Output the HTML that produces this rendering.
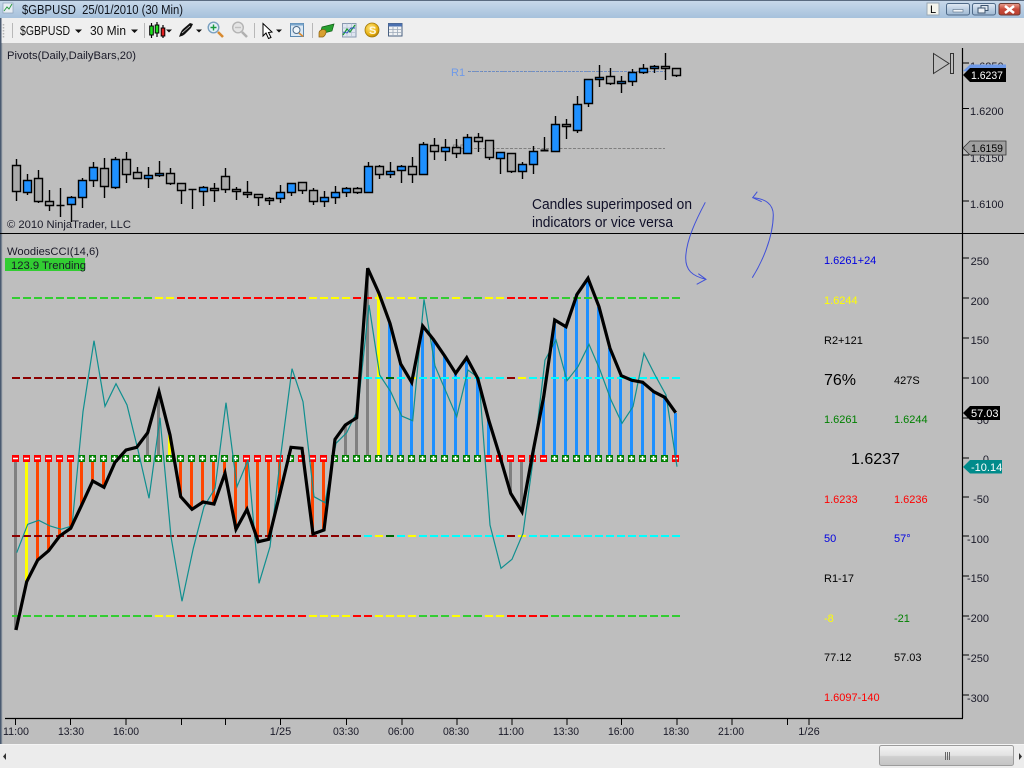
<!DOCTYPE html>
<html><head><meta charset="utf-8"><title>$GBPUSD</title>
<style>
html,body{margin:0;padding:0;background:#bebebe;width:1024px;height:768px;overflow:hidden}
svg{display:block;position:absolute;left:0;top:0}
text{font-family:"Liberation Sans",Arial,sans-serif;font-size:11px;fill:#1a1a28;white-space:pre}
</style></head><body>
<svg width="1024" height="768" viewBox="0 0 1024 768" xmlns="http://www.w3.org/2000/svg">
<defs>
<linearGradient id="tb" x1="0" y1="0" x2="0" y2="1"><stop offset="0" stop-color="#c9d9ea"/><stop offset="1" stop-color="#a6c1dc"/></linearGradient>
<linearGradient id="btn" x1="0" y1="0" x2="0" y2="1"><stop offset="0" stop-color="#e2ebf4"/><stop offset=".5" stop-color="#bccfe2"/><stop offset="1" stop-color="#9fb8d2"/></linearGradient>
<linearGradient id="cls" x1="0" y1="0" x2="0" y2="1"><stop offset="0" stop-color="#e8a090"/><stop offset=".5" stop-color="#c8493a"/><stop offset="1" stop-color="#b84030"/></linearGradient>
<linearGradient id="th" x1="0" y1="0" x2="0" y2="1"><stop offset="0" stop-color="#f4f4f4"/><stop offset=".5" stop-color="#e2e2e2"/><stop offset=".55" stop-color="#cfcfcf"/><stop offset="1" stop-color="#c4c4c4"/></linearGradient>
<radialGradient id="coin" cx=".4" cy=".35" r=".7"><stop offset="0" stop-color="#ffe680"/><stop offset=".7" stop-color="#e8b010"/><stop offset="1" stop-color="#a87808"/></radialGradient>
</defs>

<!-- background -->
<rect width="1024" height="768" fill="#bebebe"/>
<!-- title bar -->
<rect width="1024" height="18" fill="url(#tb)"/>
<rect width="1024" height="1" fill="#5a6b80"/>
<!-- window icon -->
<rect x="3" y="3" width="10" height="10" fill="#e8eef4" stroke="#8aa0b8" stroke-width=".7"/>
<path d="M4 11L7 7L9 9L12 4" fill="none" stroke="#2a9a40"/>
<text x="22" y="14" textLength="161" lengthAdjust="spacingAndGlyphs" style="font-size:13px;fill:#10141c">$GBPUSD  25/01/2010 (30 Min)</text>
<!-- window buttons -->
<rect x="927" y="3" width="12" height="12" fill="#f4f4ec" stroke="#9aa8b4"/>
<text x="930" y="13" style="font-size:11px;fill:#000">L</text>
<rect x="946.5" y="3.5" width="23" height="11.5" rx="2" fill="url(#btn)" stroke="#4f6a88"/>
<rect x="953" y="9.5" width="10" height="2.5" fill="#f0f4f8" stroke="#5a7088" stroke-width=".6"/>
<rect x="972.5" y="3.5" width="23" height="11.5" rx="2" fill="url(#btn)" stroke="#4f6a88"/>
<rect x="981" y="5.5" width="7" height="5" fill="#dfe8f0" stroke="#3e5570"/>
<rect x="978" y="8" width="7" height="5" fill="#eef2f6" stroke="#3e5570"/>
<rect x="999" y="3.5" width="21" height="11.5" rx="2" fill="url(#cls)" stroke="#6a3a34"/>
<path d="M1005 6L1014 13M1014 6L1005 13" stroke="#fff" stroke-width="2.6"/>

<!-- toolbar -->
<rect y="18" width="1024" height="25" fill="#efefef"/>
<path d="M3.5 24V38" stroke="#b4b4b4" stroke-width="1.5" stroke-dasharray="1.5 1.5"/>
<path d="M12.5 23V38M144.5 23V38M254.5 23V38M312.5 23V38" stroke="#b8b8b8"/>
<text x="20" y="35" textLength="50" lengthAdjust="spacingAndGlyphs" style="font-size:13px;fill:#111">$GBPUSD</text>
<text x="90" y="35" textLength="36" lengthAdjust="spacingAndGlyphs" style="font-size:13px;fill:#111">30 Min</text>
<path d="M75 29.5h7l-3.5 3.5zM131 29.5h7l-3.5 3.5zM166 29.5h6l-3 3zM196 29.5h6l-3 3zM276 29.5h6l-3 3z" fill="#111"/>
<!-- candle icon -->
<path d="M151.5 23V38M157 22V37M163 25V38" stroke="#000" stroke-width="1.2"/>
<rect x="149.7" y="26" width="3.6" height="9" fill="#1fe01f" stroke="#000"/>
<rect x="155.2" y="25" width="3.6" height="8" fill="#1fe01f" stroke="#000"/>
<rect x="161.2" y="28" width="3.6" height="8" fill="#e01f1f" stroke="#000"/>
<!-- pen -->
<path d="M179 37C180 34 181 31 183 29L190 23L193 24L191 28L185 34C183 36 181 36 179 37Z" fill="#111"/>
<path d="M182 33L190 26" stroke="#ddd" stroke-width=".7"/>
<!-- zoom in -->
<path d="M218 32L223 37" stroke="#d88a30" stroke-width="2.6"/>
<circle cx="213.5" cy="27.5" r="5.3" fill="#e4f0f8" stroke="#7aa0c0" stroke-width="1.4"/>
<path d="M210.5 27.5h6M213.5 24.5v6" stroke="#1a9a40" stroke-width="1.4"/>
<!-- zoom out -->
<path d="M242 32L247 37" stroke="#b0b0b0" stroke-width="2.6"/>
<circle cx="238" cy="27.5" r="5.3" fill="#e4e4e4" stroke="#b4b4b4" stroke-width="1.4"/>
<path d="M235 27.5h6" stroke="#c0c0c0" stroke-width="1.4"/>
<!-- arrow -->
<path d="M263 23.5V36L266 33L268.5 38.5L271 37.5L268.5 32.5L272 32Z" fill="#fff" stroke="#000"/>
<!-- zoom box -->
<rect x="290.5" y="23.5" width="13" height="13" fill="#dbe8f4" stroke="#5a88b0"/>
<rect x="290.5" y="23.5" width="13" height="2" fill="#7aa6cc"/>
<circle cx="296.5" cy="30" r="3.5" fill="#f0f6fa" stroke="#4a6a8a"/>
<path d="M299 33L303 36.5" stroke="#d88a30" stroke-width="1.6"/>
<!-- green/gold -->
<path d="M322 27L334 24L332 31L320 34Z" fill="#28a030" stroke="#106018" stroke-width=".7"/>
<path d="M319 33C319 30 323 29 325 30C327 31 326 35 323 37L319 37Z" fill="#d8a030" stroke="#8a6010" stroke-width=".7"/>
<!-- chart -->
<rect x="342.5" y="23.5" width="13.5" height="13.5" fill="#dfe6f0" stroke="#8a9ab0"/>
<path d="M342.5 28h13.5M342.5 32.5h13.5M347 23.5v13.5M351.5 23.5v13.5" stroke="#b4c0d0" stroke-width=".7"/>
<path d="M343 35L347 29L350 32L355 25" fill="none" stroke="#1a9a30" stroke-width="1.2"/>
<path d="M343 32L347 33L351 28L355 28" fill="none" stroke="#2a50c0" stroke-width=".9"/>
<!-- coin -->
<circle cx="372" cy="30" r="7" fill="url(#coin)" stroke="#a07808" stroke-width=".8"/>
<text x="369" y="34" style="font-size:11px;font-weight:bold;fill:#fff8e0">S</text>
<!-- table -->
<rect x="388.5" y="23.5" width="13.5" height="12.5" fill="#f0f2f4" stroke="#4a6080"/>
<rect x="388.5" y="23.5" width="13.5" height="3" fill="#4a70b0"/>
<path d="M389 29.5h13M389 32.5h13M393 27v9M397.5 27v9" stroke="#9aa8b8" stroke-width=".8"/>

<!-- left window border -->
<rect x="0" y="18" width="1.5" height="727" fill="#4a5a70"/>
<rect x="1.5" y="43" width="1" height="702" fill="#8a94a2" opacity=".5"/>

<!-- pivots -->
<text x="7" y="59" textLength="129" lengthAdjust="spacingAndGlyphs">Pivots(Daily,DailyBars,20)</text>
<text x="451" y="76" style="font-size:11px;fill:#6f9ae8">R1</text>
<text x="452" y="152" style="font-size:11px;fill:#808080">PP</text>
<path d="M468 71.5H665" stroke="#6f8fc8" stroke-dasharray="3 1"/>
<path d="M468 71.5H665" stroke="#808080" stroke-dasharray="1 6" opacity=".7"/>
<path d="M465 148.5H665" stroke="#808080" stroke-dasharray="3 1.5"/>

<!-- wicks -->
<path fill="none" stroke="#000" stroke-width="1.4" d="M16.5 159V201M27.5 174V195M38.5 170V203M49.5 190V211M60.5 188V217M71.5 196V222M82.5 178V208M93.5 162V187M104.5 158V198M115.5 157V189M126.5 152V183M137.5 167V179M148.5 167V188M159.5 161V177M170.5 168V185M181.5 183V204M192.5 189V209M203.5 186V206M214.5 183V202M225.5 168V193M236.5 187V200M247.5 181V198M258.5 194V206M269.5 197V205M280.5 185V203M291.5 183V196M302.5 182V194M313.5 188V205M324.5 191V207M335.5 186V204M346.5 187V197M357.5 187V194M368.5 162V192M379.5 165V179M390.5 162V178M401.5 165V183M412.5 157V183M423.5 142V174M434.5 138V160M445.5 139V161M456.5 139V158M467.5 134V153M478.5 133V152M489.5 140V160M500.5 152V174M511.5 153V173M522.5 162V179M533.5 146V174M544.5 137V151M555.5 116V151M566.5 119V139M577.5 96V133M588.5 79V107M599.5 65V87M610.5 68V85M621.5 76V93M632.5 69V86M643.5 64V74M654.5 65V73M665.5 53V80M676.5 68V77"/>
<!-- gray bodies -->
<path fill="#a9a9a9" stroke="#000" stroke-width="1.4" d="M12.5 165.5h8v26h-8zM34.5 178.5h8v23h-8zM45.5 201.5h8v4h-8zM100.5 168.5h8v18h-8zM122.5 159.5h8v15h-8zM133.5 172.5h8v6h-8zM166.5 173.5h8v10h-8zM177.5 183.5h8v7h-8zM210.5 188.5h8v2h-8zM221.5 176.5h8v13h-8zM232.5 189.5h8v2h-8zM243.5 192.5h8v2h-8zM254.5 194.5h8v3h-8zM265.5 198.5h8v2h-8zM298.5 182.5h8v8h-8zM309.5 190.5h8v11h-8zM353.5 188.5h8v4h-8zM375.5 166.5h8v8h-8zM408.5 166.5h8v8h-8zM430.5 145.5h8v6h-8zM452.5 147.5h8v6h-8zM474.5 137.5h8v4h-8zM485.5 140.5h8v17h-8zM507.5 153.5h8v18h-8zM562.5 124.5h8v2h-8zM606.5 76.5h8v7h-8zM661.5 66.5h8v2h-8zM672.5 68.5h8v7h-8z"/>
<!-- blue bodies -->
<path fill="#1e90ff" stroke="#000" stroke-width="1.4" d="M23.5 180.5h8v12h-8zM67.5 197.5h8v7h-8zM78.5 180.5h8v17h-8zM89.5 167.5h8v13h-8zM111.5 159.5h8v28h-8zM144.5 175.5h8v3h-8zM155.5 173.5h8v2h-8zM199.5 187.5h8v4h-8zM276.5 192.5h8v6h-8zM287.5 183.5h8v9h-8zM320.5 197.5h8v4h-8zM331.5 192.5h8v5h-8zM342.5 188.5h8v4h-8zM364.5 166.5h8v26h-8zM386.5 171.5h8v3h-8zM397.5 166.5h8v4h-8zM419.5 144.5h8v30h-8zM441.5 147.5h8v4h-8zM463.5 137.5h8v16h-8zM496.5 152.5h8v6h-8zM518.5 164.5h8v7h-8zM529.5 151.5h8v13h-8zM551.5 124.5h8v27h-8zM573.5 104.5h8v26h-8zM584.5 79.5h8v24h-8zM595.5 77.5h8v2h-8zM617.5 81.5h8v2h-8zM628.5 72.5h8v9h-8zM639.5 68.5h8v4h-8zM650.5 66.5h8v2h-8z"/>
<!-- dojis -->
<path d="M56.5 205.5h8M188.5 189.5h8" stroke="#000" stroke-width="1.4"/>
<path d="M540.5 150.5h8" stroke="#000" stroke-width="2"/>

<text x="7" y="228" textLength="124" lengthAdjust="spacingAndGlyphs">© 2010 NinjaTrader, LLC</text>

<!-- annotation -->
<text x="532" y="209" textLength="160" lengthAdjust="spacingAndGlyphs" style="font-size:14.5px;fill:#101028">Candles superimposed on</text>
<text x="532" y="227" textLength="141" lengthAdjust="spacingAndGlyphs" style="font-size:14.5px;fill:#101028">indicators or vice versa</text>

<!-- pane separator -->
<rect x="0" y="233" width="1024" height="1" fill="#000"/>

<!-- hand drawn arrows -->
<path fill="none" stroke="#4050d8" stroke-width="1" d="M705.3 202.3C697 218 686 240 685.7 258C685.7 270 692 276 706 279.3M698.3 273.7L706 279.3L696.7 284.3"/>
<path fill="none" stroke="#4050d8" stroke-width="1" d="M752.3 277.7C762 262 773 238 773.3 215C773.3 204 765 198.5 752.7 197.7M757.3 191.7L752.7 197.7L761.7 201.7"/>

<!-- top right play icon -->
<path d="M933.5 53.5V73.5L949 63.5Z" fill="none" stroke="#333"/>
<rect x="950.5" y="53.5" width="3" height="20" fill="none" stroke="#333"/>

<!-- CCI legend -->
<text x="7" y="255" textLength="92" lengthAdjust="spacingAndGlyphs">WoodiesCCI(14,6)</text>
<rect x="5" y="258" width="80" height="13" fill="#32cd32"/>
<text x="11" y="269" textLength="75" lengthAdjust="spacingAndGlyphs">123.9 Trending</text>

<!-- histogram bars -->
<g fill="none" stroke-width="3">
<path stroke="#ff4500" d="M37.5 458V560M48.5 458V551M59.5 458V536M70.5 458V528M81.5 458V505M92.5 458V481M103.5 458V487M180.5 458V497M191.5 458V509M202.5 458V502M213.5 458V504M224.5 458V473M235.5 458V529M246.5 458V509M257.5 458V541M268.5 458V539M279.5 458V493M312.5 458V534M323.5 458V530"/>
<path stroke="#808080" d="M15.5 458V630M147.5 458V433M158.5 458V392M345.5 458V425M356.5 458V418M367.5 458V268M510.5 458V493M521.5 458V512"/>
<path stroke="#ffff00" d="M26.5 458V581M169.5 458V435M378.5 458V293"/>
<path stroke="#1e90ff" d="M389.5 458V323M400.5 458V364M411.5 458V382M422.5 458V326M433.5 458V339M444.5 458V356M455.5 458V373M466.5 458V358M477.5 458V378M488.5 458V420M499.5 458V456M532.5 458V453M543.5 458V397M554.5 458V320M565.5 458V327M576.5 458V294M587.5 458V278M598.5 458V307M609.5 458V348M620.5 458V376M631.5 458V380M642.5 458V382M653.5 458V392M664.5 458V397M675.5 458V413"/>
</g>

<!-- dashed level lines -->
<g fill="none" stroke-width="2" stroke-dasharray="8 3">
<path stroke="#32cd32" d="M12 298H152M419 298H449M463 298H482M551 298H680M12 616H152M419 616H449M463 616H482M551 616H680"/>
<path stroke="#ffff00" d="M155 298H174M309 298H350M375 298H416M452 298H460M485 298H504M155 616H174M309 616H350M375 616H416M452 616H460M485 616H504"/>
<path stroke="#ff0000" d="M177 298H306M353 298H372M507 298H548M177 616H306M353 616H372M507 616H548"/>
<path stroke="#8b0000" d="M12 378H361M507 378H515M12 536H361M507 536H515"/>
<path stroke="#00ffff" d="M364 378H383M397 378H405M419 378H504M529 378H680M364 536H372M397 536H405M419 536H504M529 536H680"/>
<path stroke="#ffff00" d="M408 378H416M518 378H526M375 536H383M408 536H416M518 536H526"/>
<path stroke="#006400" d="M386 378H394M386 536H394"/>
</g>

<!-- zero line squares -->
<g fill="none">
<path stroke="#ff0000" stroke-width="7" stroke-dasharray="7 4" d="M12 458.5H74M243 458.5H283M298 458.5H327M485 458.5H547M672 458.5H679"/>
<path stroke="#008000" stroke-width="7" stroke-dasharray="7 4" d="M78 458.5H239M287 458.5H294M331 458.5H481M551 458.5H668"/>
<path stroke="#fff" stroke-width="1.5" stroke-dasharray="5 6" d="M13 458.5H678"/>
<path stroke="#fff" stroke-width="5" stroke-dasharray="1.5 9.5" d="M80.75 458.5H237M289.75 458.5H291.5M333.75 458.5H479M553.75 458.5H666"/>
</g>

<!-- teal line -->
<path fill="none" stroke="#0f8f8f" stroke-width="1.2" d="M16.7 552.7L27.7 524.3L38.7 520.3L50 526L61 529.3L72 526L83 411.7L94 340.7L105 406.3L116 383.7L127 405L138 450L149 498.3L160 417.7L171 536.7L182 601.3L193.3 548.3L204 506.7L215 488.3L226 402.7L237 486.7L248 460L259 583.3L270 546.7L281 453.3L292 368.7L303 401.7L314 496.7L325 502.7L336 443.3L346.7 432.7L357.7 410L369 305L379.7 375L390.7 391.7L401.7 416L412.7 420.7L424 299.3L435 366L446 391.7L456.7 416.7L468 370L479 378.3L490 525L501 568.3L512 559.3L523 533.3L534 453.3L545 360L556 340L567 380.7L578 366.7L589 344.3L600 370L611 400L622 423.3L633 406.7L644 353.3L655 375L666 395L677 466.7"/>
<!-- black CCI line -->
<path fill="none" stroke="#000" stroke-width="3.2" stroke-linejoin="miter" d="M16 630L26.7 581.7L37.7 560L48.7 550.7L59.7 536L70.7 528.3L81.7 505L92.7 481L104 487.3L115 462.3L126 450L136.7 447.3L147.7 432.7L159 391.7L170 435L180.7 496.7L192 509.3L203 502L214 504L225 473.3L236 529.3L247 509.3L258.3 541.7L268.7 539.3L280 493.3L291 447.3L302 448.3L313 534L324 530L335 439.3L345.3 425L356.7 417.7L367.7 268.3L379 293.3L390 323.3L400.7 364L411.7 382.3L422.7 326L433.3 339.3L444.7 356L455.7 373.3L466.7 357.7L477.7 378.3L488.7 420L499.7 455.7L510.7 493.3L522 511.7L532.7 453.3L543.7 396.7L554.7 320L566 326.7L577 294.3L588 278.3L599 306.7L610 348.3L621.3 375.7L632 380.3L642.7 382.3L653.7 391.7L664.7 397.3L675.7 412.7"/>

<!-- stats column -->
<text x="824" y="264" style="fill:#0000e0">1.6261+24</text>
<text x="824" y="304" style="fill:#ffff00">1.6244</text>
<text x="824" y="344" style="fill:#000">R2+121</text>
<text x="824" y="385" style="font-size:16px;fill:#000">76%</text>
<text x="894" y="384" style="fill:#000">427S</text>
<text x="824" y="423" style="fill:#008000">1.6261</text>
<text x="894" y="423" style="fill:#008000">1.6244</text>
<text x="851" y="464" style="font-size:16px;fill:#000">1.6237</text>
<text x="824" y="503" style="fill:#ff0000">1.6233</text>
<text x="894" y="503" style="fill:#ff0000">1.6236</text>
<text x="824" y="542" style="fill:#0000e0">50</text>
<text x="894" y="542" style="fill:#0000e0">57°</text>
<text x="824" y="582" style="fill:#000">R1-17</text>
<text x="824" y="622" style="fill:#ffff00">-8</text>
<text x="894" y="622" style="fill:#008000">-21</text>
<text x="824" y="661" style="fill:#000">77.12</text>
<text x="894" y="661" style="fill:#000">57.03</text>
<text x="824" y="701" style="fill:#ff0000">1.6097-140</text>

<!-- right axis -->
<path d="M962.5 48V718" stroke="#000" stroke-width="1.2"/>
<path d="M963 63h6M963 108.5h6M963 155h6M963 201h6M963 258h6M963 298h6M963 338h6M963 378h6M963 418h6M963 458h6M963 497h6M963 536h6M963 576h6M963 616h6M963 655h6M963 695h6" stroke="#000"/>
<text x="970" y="70">1.6250</text>
<text x="970" y="115">1.6200</text>
<text x="970" y="162">1.6150</text>
<text x="970" y="208">1.6100</text>
<g text-anchor="end">
<text x="989" y="265">250</text><text x="989" y="305">200</text><text x="989" y="344">150</text><text x="989" y="384">100</text><text x="989" y="424">50</text><text x="989" y="463">0</text><text x="989" y="503">-50</text><text x="989" y="543">-100</text><text x="989" y="582">-150</text><text x="989" y="622">-200</text><text x="989" y="662">-250</text><text x="989" y="702">-300</text>
</g>

<!-- price flags -->
<polygon points="963,71 970,64.5 1006,64.5 1006,72 970,72" fill="#6f9ae8"/>
<polygon points="963,75 970,68 1006,68 1006,82 970,82" fill="#000"/>
<text x="971" y="79" textLength="32" lengthAdjust="spacingAndGlyphs" style="fill:#fff">1.6237</text>
<polygon points="963,148 970,141 1006,141 1006,155 970,155" fill="#a0a0a0" stroke="#333" stroke-width=".8"/>
<text x="971" y="152" textLength="32" lengthAdjust="spacingAndGlyphs" style="fill:#000">1.6159</text>
<polygon points="963,413 970,406 1000,406 1000,420 970,420" fill="#000"/>
<text x="971" y="417" style="fill:#fff">57.03</text>
<polygon points="963,467 970,460 1002,460 1002,473.5 970,473.5" fill="#008b8b"/>
<text x="971" y="471" style="fill:#fff">-10.14</text>

<!-- bottom axis -->
<path d="M5 718.5H963" stroke="#000" stroke-width="1.2"/>
<path d="M15.5 718V725M70.5 718V725M126 718V725M181.5 718V725M225.5 718V725M280.5 718V725M346.5 718V725M402 718V725M457 718V725M512 718V725M567 718V725M621.5 718V725M677 718V725M732 718V725M787.5 718V725M809 718V725" stroke="#000"/>
<g text-anchor="middle">
<text x="16" y="735" textLength="26" lengthAdjust="spacingAndGlyphs">11:00</text><text x="71" y="735" textLength="26" lengthAdjust="spacingAndGlyphs">13:30</text><text x="126" y="735" textLength="26" lengthAdjust="spacingAndGlyphs">16:00</text><text x="280.5" y="735">1/25</text><text x="346" y="735" textLength="26" lengthAdjust="spacingAndGlyphs">03:30</text><text x="401" y="735" textLength="26" lengthAdjust="spacingAndGlyphs">06:00</text><text x="456" y="735" textLength="26" lengthAdjust="spacingAndGlyphs">08:30</text><text x="511" y="735" textLength="26" lengthAdjust="spacingAndGlyphs">11:00</text><text x="566" y="735" textLength="26" lengthAdjust="spacingAndGlyphs">13:30</text><text x="621" y="735" textLength="26" lengthAdjust="spacingAndGlyphs">16:00</text><text x="676" y="735" textLength="26" lengthAdjust="spacingAndGlyphs">18:30</text><text x="731" y="735" textLength="26" lengthAdjust="spacingAndGlyphs">21:00</text><text x="809" y="735">1/26</text>
</g>

<!-- scrollbar -->
<rect y="744" width="1024" height="1" fill="#f4f4f4"/>
<rect y="745" width="1024" height="23" fill="#ececec"/>
<path d="M6 753V760L3 756.5ZM1019 753V760L1022 756.5Z" fill="#333"/>
<rect x="879.5" y="745.5" width="134" height="20" rx="2" fill="url(#th)" stroke="#9c9c9c"/>
<path d="M945.5 752V760M947.5 752V760M949.5 752V760" stroke="#666"/>
</svg>
</body></html>
